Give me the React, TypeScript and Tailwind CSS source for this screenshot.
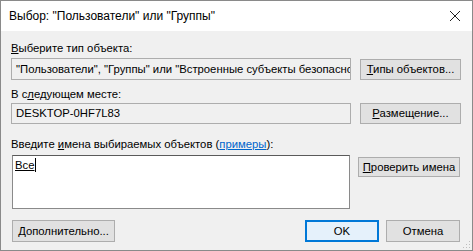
import React from 'react';

function Btn({ children, className = '' }: { children: React.ReactNode; className?: string }) {
  return (
    <div
      className={`flex items-center justify-center border border-[#adadad] bg-[#e1e1e1] text-black whitespace-nowrap ${className}`}
    >
      {children}
    </div>
  );
}

export default function App() {
  return (
    <div
      className="w-[473px] h-[251px] flex flex-col border border-[#8a8a8a] bg-[#f0f0f0] text-black overflow-hidden text-[11.3px]"
      style={{ fontFamily: '"Liberation Sans", Arial, sans-serif' }}
    >
      {/* Title bar */}
      <div className="h-[30px] bg-white flex items-center justify-between pl-[8px] pr-[10px] shrink-0">
        <span className="text-[12px]">Выбор: "Пользователи" или "Группы"</span>
        <svg width="12" height="12" viewBox="0 0 12 12" className="mr-[1px]">
          <path d="M1 1 L11 11 M11 1 L1 11" stroke="#222" strokeWidth="1" />
        </svg>
      </div>

      {/* Body */}
      <div className="flex-1 flex flex-col pl-[10px] pr-[11px] pt-[10px] relative">
        <div className="h-[14px] leading-[14px]">
          <span className="underline">В</span>ыберите тип объекта:
        </div>
        <div className="flex items-center gap-[9px] mt-[3px]">
          <div className="flex-1 min-w-0 h-[22px] border border-[#adadad] bg-[#f0f0f0] flex items-center pl-[4px] overflow-hidden whitespace-nowrap">
            "Пользователи", "Группы" или "Встроенные субъекты безопасности"
          </div>
          <Btn className="w-[101px] h-[21px] shrink-0">
            <span>
              <span className="underline">Т</span>ипы объектов...
            </span>
          </Btn>
        </div>

        <div className="h-[14px] leading-[14px] mt-[7px]">
          В с<span className="underline">л</span>едующем месте:
        </div>
        <div className="flex items-center gap-[9px] mt-[2px]">
          <div className="flex-1 min-w-0 h-[21px] border border-[#adadad] bg-[#f0f0f0] flex items-center pl-[4px]">
            DESKTOP-0HF7L83
          </div>
          <Btn className="w-[101px] h-[21px] shrink-0">
            <span>
              <span className="underline">Р</span>азмещение...
            </span>
          </Btn>
        </div>

        <div className="h-[14px] leading-[14px] mt-[13px]">
          Введите <span className="underline">и</span>мена выбираемых объектов (
          <span className="text-[#0066cc] underline">примеры</span>):
        </div>
        <div className="flex items-start gap-[8px] mt-[4px]">
          <div className="flex-1 min-w-0 h-[54px] border border-[#8a8a8a] border-t-[#5a5a5a] bg-white pl-[2px] pt-[1px] ml-[1px]">
            <span className="inline-flex items-center">
              <span className="underline">Все</span>
              <span className="w-[1px] h-[14px] bg-black ml-[1px]" />
            </span>
          </div>
          <Btn className="w-[102px] h-[20px] mt-[2px] mr-[1px] shrink-0">
            <span>
              <span className="underline">П</span>роверить имена
            </span>
          </Btn>
        </div>

        <div className="flex items-center mt-[11px]">
          <Btn className="w-[103px] h-[22px] ml-[1px]">
            <span>
              <span className="underline">Д</span>ополнительно...
            </span>
          </Btn>
          <div className="flex-1" />
          <div className="w-[74px] h-[22px] border-2 border-[#0078d7] bg-[#e5f1fb] flex items-center justify-center">
            OK
          </div>
          <Btn className="w-[74px] h-[22px] ml-[7px] mr-[1px]">Отмена</Btn>
        </div>

        {/* size grip */}
        <svg width="8" height="8" viewBox="0 0 8 8" className="absolute right-[1px] bottom-[1px]">
          <rect x="6" y="0" width="1" height="1" fill="#bdbdbd" />
          <rect x="3" y="3" width="1" height="1" fill="#bdbdbd" />
          <rect x="6" y="3" width="1" height="1" fill="#bdbdbd" />
          <rect x="0" y="6" width="1" height="1" fill="#bdbdbd" />
          <rect x="3" y="6" width="1" height="1" fill="#bdbdbd" />
          <rect x="6" y="6" width="1" height="1" fill="#bdbdbd" />
        </svg>
      </div>
    </div>
  );
}
